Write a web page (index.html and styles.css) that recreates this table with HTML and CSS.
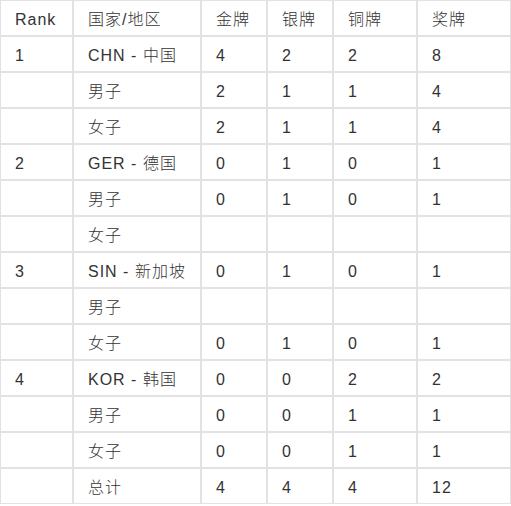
FILE: index.html
```html
<!DOCTYPE html>
<html lang="zh">
<head>
<meta charset="utf-8">
<title>奖牌榜</title>
<link rel="stylesheet" href="styles.css">
</head>
<body>
<table class="medals">
  <thead>
    <tr>
      <th class="c-rank">Rank</th>
      <th class="c-name">国家/地区</th>
      <th class="c-g">金牌</th>
      <th class="c-s">银牌</th>
      <th class="c-b">铜牌</th>
      <th class="c-t">奖牌</th>
    </tr>
  </thead>
  <tbody>
    <tr><td>1</td><td>CHN - 中国</td><td>4</td><td>2</td><td>2</td><td>8</td></tr>
    <tr><td></td><td>男子</td><td>2</td><td>1</td><td>1</td><td>4</td></tr>
    <tr><td></td><td>女子</td><td>2</td><td>1</td><td>1</td><td>4</td></tr>
    <tr><td>2</td><td>GER - 德国</td><td>0</td><td>1</td><td>0</td><td>1</td></tr>
    <tr><td></td><td>男子</td><td>0</td><td>1</td><td>0</td><td>1</td></tr>
    <tr><td></td><td>女子</td><td></td><td></td><td></td><td></td></tr>
    <tr><td>3</td><td>SIN - 新加坡</td><td>0</td><td>1</td><td>0</td><td>1</td></tr>
    <tr><td></td><td>男子</td><td></td><td></td><td></td><td></td></tr>
    <tr><td></td><td>女子</td><td>0</td><td>1</td><td>0</td><td>1</td></tr>
    <tr><td>4</td><td>KOR - 韩国</td><td>0</td><td>0</td><td>2</td><td>2</td></tr>
    <tr><td></td><td>男子</td><td>0</td><td>0</td><td>1</td><td>1</td></tr>
    <tr><td></td><td>女子</td><td>0</td><td>0</td><td>1</td><td>1</td></tr>
    <tr><td></td><td>总计</td><td>4</td><td>4</td><td>4</td><td>12</td></tr>
  </tbody>
</table>
</body>
</html>
```
FILE: styles.css
```css
html, body {
  margin: 0;
  padding: 0;
  background: #fff;
}
.medals {
  width: 511px;
  table-layout: fixed;
  border-collapse: separate;
  border-spacing: 0;
  font-family: "Liberation Sans", Arial, "Noto Sans CJK SC", sans-serif;
  font-size: 16px;
  font-weight: 300;
  letter-spacing: 1px;
  color: #333;
}
.medals th,
.medals td {
  box-sizing: border-box;
  border: 1px solid #e2e2e2;
  padding: 3px 0 0 14px;
  line-height: 31px;
  height: 36px;
  text-align: left;
  font-weight: 300;
  white-space: nowrap;
  vertical-align: middle;
}
.c-rank { width: 73px; }
.c-name { width: 128px; }
.c-g { width: 66px; }
.c-s { width: 66px; }
.c-b { width: 84px; }
.c-t { width: 94px; }
```
